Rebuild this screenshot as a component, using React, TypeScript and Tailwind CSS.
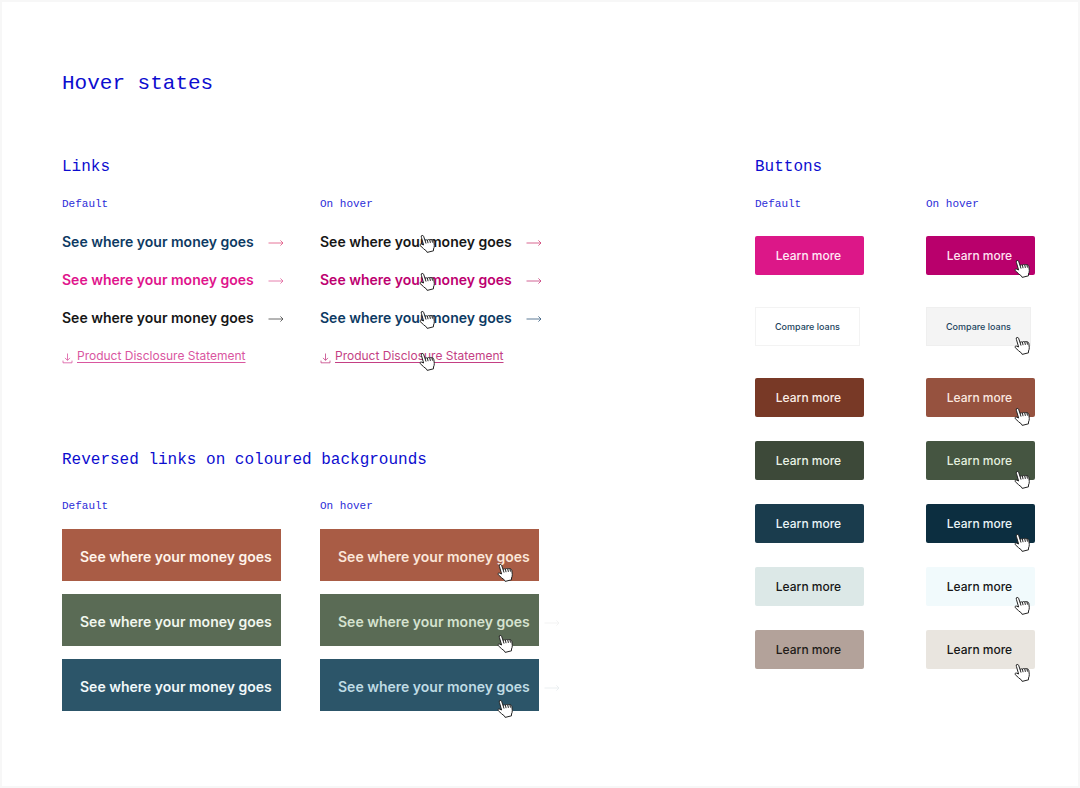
import React from "react";
import clsx from "clsx";

type IconProps = { className?: string };

const Hand = ({ className }: IconProps) => (
  <svg
    viewBox="0 0 16 20"
    className={clsx("absolute w-4 h-5 pointer-events-none", className)}
    fill="white"
    stroke="#222"
    strokeWidth="1"
    strokeLinejoin="round"
    strokeLinecap="round"
    aria-hidden="true"
  >
    <path d="M2.6 1.9C3.2 1.1 4.3 1.4 4.6 2.3L6.1 6.6C6.7 5.7 7.9 5.7 8.4 6.2C9.1 5.4 10.2 5.4 10.8 6C11.5 5.3 12.5 5.4 13 6C13.9 5.8 14.6 6.3 14.8 7.2L15.3 11.6C15.4 13 14.9 14 14.5 15V16.8L8.2 18.4L7.4 16.9C5.6 15.8 3.6 13.8 1.3 11.7C0.5 10.8 1.3 9.8 2.5 10.1L4.6 11L2.4 3.4C2.2 2.8 2.3 2.3 2.6 1.9Z" />
    <path d="M6.1 6.6L6.9 9.2M8.4 6.2L9 8.8M10.8 6L11.3 8.5M13 6L13.4 8.2" fill="none" />
  </svg>
);

const Arrow = ({ className }: IconProps) => (
  <svg
    viewBox="0 0 16 8"
    className={clsx("w-4 h-2 mt-0.5 shrink-0", className)}
    fill="none"
    stroke="currentColor"
    strokeWidth="0.8"
    aria-hidden="true"
  >
    <path d="M0.5 4H15M12.4 1.4L15 4L12.4 6.6" />
  </svg>
);

const Download = () => (
  <svg
    viewBox="0 0 11 12"
    className="w-[11px] h-3 mt-1 shrink-0"
    fill="none"
    stroke="currentColor"
    strokeWidth="0.8"
    aria-hidden="true"
  >
    <path d="M5.5 1.5V8.3M3 5.9L5.5 8.4L8 5.9M1 8.6V10.8H10V8.6" />
  </svg>
);

const linkColumns = [
  {
    title: "Default",
    hover: false,
    pds: "text-[#d9569f]",
    links: [
      { text: "text-[#0d3a63]", arrow: "text-[#e0507f]" },
      { text: "text-[#e0148c]", arrow: "text-[#e0609a]" },
      { text: "text-[#161616]", arrow: "text-[#444444]" },
    ],
  },
  {
    title: "On hover",
    hover: true,
    pds: "text-[#c43f84]",
    links: [
      { text: "text-[#161616]", arrow: "text-[#cf3f74]" },
      { text: "text-[#bd0070]", arrow: "text-[#c63c7c]" },
      { text: "text-[#0d3a63]", arrow: "text-[#34597c]" },
    ],
  },
];

const reversedColumns = [
  {
    title: "Default",
    hover: false,
    links: [
      { box: "bg-[#a95c45] text-[#fff3ea]", arrow: "text-white" },
      { box: "bg-[#5a6b55] text-[#f1f7ee]", arrow: "text-white" },
      { box: "bg-[#2c5569] text-[#f0f8fa]", arrow: "text-white" },
    ],
  },
  {
    title: "On hover",
    hover: true,
    links: [
      { box: "bg-[#a95c45] text-[#fbe6d9]", arrow: "text-white" },
      { box: "bg-[#5a6b55] text-[#d5e2cf]", arrow: "text-[#f0f0f0]" },
      { box: "bg-[#2c5569] text-[#bfdbe4]", arrow: "text-[#e6ebed]" },
    ],
  },
];

const buttonColumns = [
  {
    title: "Default",
    hover: false,
    buttons: [
      "bg-[#dc1788] text-[#ffeaf5]",
      "bg-white text-[#1d4460] border border-[#f3f3f3]",
      "bg-[#783926] text-[#fbeee6]",
      "bg-[#3d4939] text-[#eaf3e6]",
      "bg-[#1a3c4d] text-[#eaf5f8]",
      "bg-[#dce8e7] text-[#161616]",
      "bg-[#b3a29a] text-[#211b18]",
    ],
  },
  {
    title: "On hover",
    hover: true,
    buttons: [
      "bg-[#b9006c] text-[#ffe3f1]",
      "bg-[#f4f4f4] text-[#1d4460] border border-[#efefef]",
      "bg-[#96523f] text-[#fbe9e0]",
      "bg-[#455541] text-[#e4f0df]",
      "bg-[#0c2e40] text-[#eaf5f8]",
      "bg-[#f1fafc] text-[#161616]",
      "bg-[#e9e5df] text-[#161616]",
    ],
  },
];

const Heading = ({ children }: { children: React.ReactNode }) => (
  <h2 className="font-['Liberation_Mono',monospace] text-base leading-6 text-[#0d0dcf]">
    {children}
  </h2>
);

const Label = ({ children }: { children: React.ReactNode }) => (
  <h3 className="font-['Liberation_Mono',monospace] text-[11px] leading-4 text-[#2b2bd8]">
    {children}
  </h3>
);

const App = () => {
  return (
    <div className="min-h-screen bg-white border-2 border-[#f7f7f7] pt-16 pb-12 pl-[60px] pr-[43px] font-[Inter,sans-serif]">
      <h1 className="font-['Liberation_Mono',monospace] text-[21px] leading-9 text-[#0d0dcf]">
        Hover states
      </h1>

      <main className="flex justify-between items-start pt-[53px]">
        <div>
          <section>
            <Heading>Links</Heading>
            <div className="flex gap-[39px] pt-[17px]">
              {linkColumns.map((column) => (
                <div key={column.title} className="w-[219px]">
                  <Label>{column.title}</Label>
                  <ul className="flex flex-col gap-[14px] pt-[18px]">
                    {column.links.map((link) => (
                      <li key={link.text} className="relative">
                        <a
                          href="#"
                          className={clsx(
                            "flex items-center gap-[14px] h-6 whitespace-nowrap text-sm font-semibold",
                            link.text
                          )}
                        >
                          See where your money goes
                          <Arrow className={link.arrow} />
                        </a>
                        {column.hover && <Hand className="left-[99px] top-1" />}
                      </li>
                    ))}
                    <li className="relative">
                      <a
                        href="#"
                        className={clsx(
                          "flex items-center gap-1 h-6 whitespace-nowrap text-xs",
                          column.pds
                        )}
                      >
                        <Download />
                        <span className="underline underline-offset-2">
                          Product Disclosure Statement
                        </span>
                      </a>
                      {column.hover && <Hand className="left-[99px] top-2" />}
                    </li>
                  </ul>
                </div>
              ))}
            </div>
          </section>

          <section className="pt-20">
            <Heading>Reversed links on coloured backgrounds</Heading>
            <div className="flex gap-[39px] pt-[26px]">
              {reversedColumns.map((column) => (
                <div key={column.title} className="w-[219px]">
                  <Label>{column.title}</Label>
                  <ul className="flex flex-col gap-[13px] pt-[15px]">
                    {column.links.map((link, i) => (
                      <li key={link.box} className="relative">
                        <a
                          href="#"
                          className={clsx(
                            "flex items-center gap-[14px] h-[52px] pt-1 pl-[18px] whitespace-nowrap text-sm font-semibold",
                            link.box
                          )}
                        >
                          See where your money goes
                          <Arrow className={link.arrow} />
                        </a>
                        {column.hover && (
                          <Hand
                            className={clsx(
                              "right-[26px]",
                              i === 0 ? "-bottom-0.5" : "-bottom-2"
                            )}
                          />
                        )}
                      </li>
                    ))}
                  </ul>
                </div>
              ))}
            </div>
          </section>
        </div>

        <section>
          <Heading>Buttons</Heading>
          <div className="flex gap-[62px] pt-[17px]">
            {buttonColumns.map((column) => (
              <div key={column.title} className="w-[109px]">
                <Label>{column.title}</Label>
                <div className="flex flex-col gap-6 pt-6">
                  {column.buttons.map((color, i) => (
                    <div
                      key={color}
                      className={clsx("relative", i === 1 && "my-2")}
                    >
                      <button
                        type="button"
                        className={clsx(
                          "block h-[39px] whitespace-nowrap font-medium",
                          i === 1
                            ? "w-[105px] text-[9px]"
                            : "w-full rounded-xs pr-0.5 text-xs",
                          color
                        )}
                      >
                        {i === 1 ? "Compare loans" : "Learn more"}
                      </button>
                      {column.hover && (
                        <Hand
                          className={clsx(
                            "right-[5px]",
                            i === 0 && "-bottom-1",
                            i > 0 && i < 6 && "-bottom-[10px]",
                            i === 6 && "-bottom-[14px]"
                          )}
                        />
                      )}
                    </div>
                  ))}
                </div>
              </div>
            ))}
          </div>
        </section>
      </main>
    </div>
  );
};

export default App;
